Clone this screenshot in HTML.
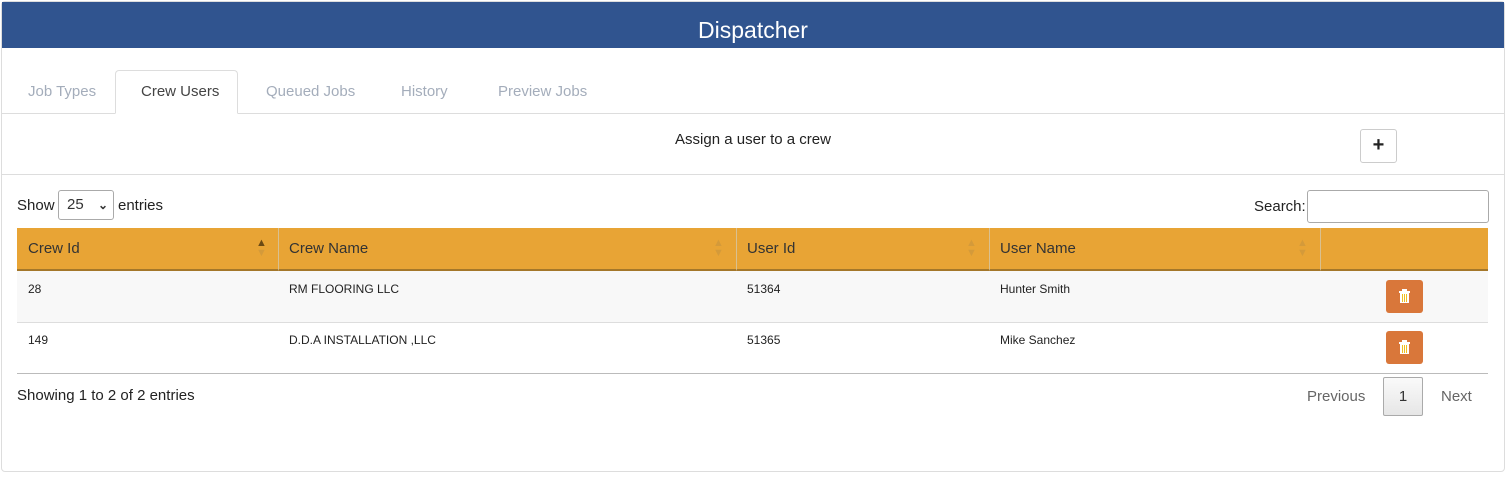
<!DOCTYPE html><html><head><style>
body{margin:0;width:1510px;height:477px;background:#fff;font-family:"Liberation Sans",sans-serif;position:relative;overflow:hidden;color:#333}
.a{position:absolute}
.card{left:1px;top:1px;width:1502px;height:469px;border:1px solid #ddd;border-radius:4px}
.hdr{left:2px;top:2px;width:1502px;height:46px;background:#30548f;color:#fff;font-size:23px;text-align:center;line-height:56px}
.tab{top:83px;font-size:15px;color:#a4adbb}
.th{top:228px;height:43px;background:#e8a435;border-bottom:2px solid #a4772a;box-sizing:border-box;font-size:15px;color:#333;line-height:41px}
.col{border-right:1px solid #d9c090}
.td{font-size:12px;color:#222}
.del{width:37px;height:33px;background:#d9773a;border-radius:3px}
.arr{font-size:11px;line-height:10px;color:#d49a3a}
</style></head><body>
<div class="a card"></div>
<div class="a hdr">Dispatcher</div>
<div class="a" style="left:2px;top:113px;width:1502px;height:1px;background:#ddd"></div>
<div class="a" style="left:115px;top:70px;width:123px;height:44px;border:1px solid #ddd;border-bottom:1px solid #fff;border-radius:4px 4px 0 0;background:#fff;box-sizing:border-box"></div>
<div class="a tab" style="left:28px">Job Types</div>
<div class="a tab" style="left:141px;color:#444">Crew Users</div>
<div class="a tab" style="left:266px">Queued Jobs</div>
<div class="a tab" style="left:401px">History</div>
<div class="a tab" style="left:498px">Preview Jobs</div>
<div class="a" style="left:0;top:131px;width:1506px;text-align:center;font-size:15px;color:#222">Assign a user to a crew</div>
<div class="a" style="left:1360px;top:129px;width:37px;height:34px;border:1px solid #ccc;border-radius:3px;box-sizing:border-box;text-align:center;line-height:31px;font-size:20px;font-weight:bold;color:#222">+</div>
<div class="a" style="left:2px;top:174px;width:1502px;height:1px;background:#ddd"></div>
<div class="a" style="left:17px;top:197px;font-size:15px;color:#222">Show</div>
<div class="a" style="left:58px;top:190px;width:56px;height:30px;border:1px solid #aaa;border-radius:3px;font-size:15px;line-height:28px;box-sizing:border-box;padding-left:8px">25<span style="position:absolute;left:39px;top:0px;font-size:12px;font-weight:bold">&#8964;</span></div>
<div class="a" style="left:118px;top:197px;font-size:15px;color:#222">entries</div>
<div class="a" style="left:1254px;top:198px;font-size:15px;color:#222">Search:</div>
<div class="a" style="left:1307px;top:190px;width:182px;height:33px;border:1px solid #aaa;border-radius:3px;box-sizing:border-box"></div>
<div class="a th col" style="left:17px;width:262px;padding-left:11px">Crew Id<span class="a arr" style="left:239px;top:10px;color:#6b4a14">▲<br><span style="color:#d49a3a">▼</span></span></div>
<div class="a th col" style="left:279px;width:458px;padding-left:10px">Crew Name<span class="a arr" style="left:434px;top:10px">▲<br>▼</span></div>
<div class="a th col" style="left:737px;width:253px;padding-left:10px">User Id<span class="a arr" style="left:229px;top:10px">▲<br>▼</span></div>
<div class="a th col" style="left:990px;width:331px;padding-left:10px">User Name<span class="a arr" style="left:307px;top:10px">▲<br>▼</span></div>
<div class="a th" style="left:1321px;width:167px"></div>
<div class="a" style="left:17px;top:271px;width:1471px;height:51px;background:#f8f8f8;border-bottom:1px solid #ddd"></div>
<div class="a" style="left:17px;top:373px;width:1471px;height:1px;background:#bbb"></div>
<div class="a td" style="left:28px;top:282px">28</div>
<div class="a td" style="left:289px;top:282px">RM FLOORING LLC</div>
<div class="a td" style="left:747px;top:282px">51364</div>
<div class="a td" style="left:1000px;top:282px">Hunter Smith</div>
<div class="a td" style="left:28px;top:333px">149</div>
<div class="a td" style="left:289px;top:333px">D.D.A INSTALLATION ,LLC</div>
<div class="a td" style="left:747px;top:333px">51365</div>
<div class="a td" style="left:1000px;top:333px">Mike Sanchez</div>
<div class="a del" style="left:1386px;top:280px"><svg width="37" height="33"><rect x="13" y="11" width="11" height="2" fill="#fff"/><rect x="16" y="9" width="5" height="2" fill="#fff"/><rect x="14" y="13" width="9" height="10" fill="#fff"/><rect x="16" y="14" width="1" height="8" fill="#f0c020"/><rect x="18" y="14" width="1" height="8" fill="#f0c020"/><rect x="20" y="14" width="1" height="8" fill="#f0c020"/></svg></div>
<div class="a del" style="left:1386px;top:331px"><svg width="37" height="33"><rect x="13" y="11" width="11" height="2" fill="#fff"/><rect x="16" y="9" width="5" height="2" fill="#fff"/><rect x="14" y="13" width="9" height="10" fill="#fff"/><rect x="16" y="14" width="1" height="8" fill="#f0c020"/><rect x="18" y="14" width="1" height="8" fill="#f0c020"/><rect x="20" y="14" width="1" height="8" fill="#f0c020"/></svg></div>
<div class="a" style="left:17px;top:387px;font-size:15px;color:#222">Showing 1 to 2 of 2 entries</div>
<div class="a" style="left:1307px;top:388px;font-size:15px;color:#666">Previous</div>
<div class="a" style="left:1383px;top:377px;width:40px;height:39px;border:1px solid #aaa;border-radius:2px;box-sizing:border-box;background:linear-gradient(#fafafa,#e6e6e6);text-align:center;line-height:37px;font-size:15px">1</div>
<div class="a" style="left:1441px;top:388px;font-size:15px;color:#666">Next</div>
</body></html>
